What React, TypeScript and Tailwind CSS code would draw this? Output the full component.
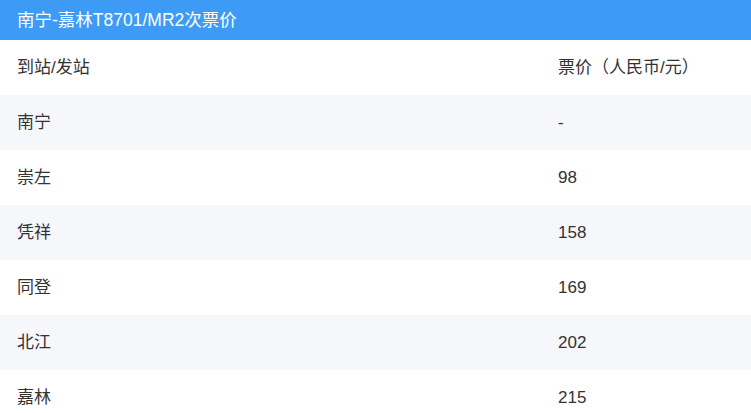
const rows = [
  { station: "南宁", price: "-" },
  { station: "崇左", price: "98" },
  { station: "凭祥", price: "158" },
  { station: "同登", price: "169" },
  { station: "北江", price: "202" },
  { station: "嘉林", price: "215" },
];

export default function App() {
  return (
    <div
      className="w-[751px] bg-white text-[17px] text-[#333]"
      style={{ fontFamily: '"Liberation Sans", "Noto Sans CJK SC", sans-serif' }}
    >
      <div className="flex h-[40px] items-center bg-[#3d9bf6] px-[17px] text-[17.5px] text-white">
        南宁-嘉林T8701/MR2次票价
      </div>
      <div className="grid h-[55px] grid-cols-[541px_1fr] items-center px-[17px]">
        <span>到站/发站</span>
        <span>票价（人民币/元）</span>
      </div>
      {rows.map((row, i) => (
        <div
          key={row.station}
          className={`grid h-[55px] grid-cols-[541px_1fr] items-center px-[17px] ${i % 2 === 0 ? "bg-[#f5f7fa]" : "bg-white"}`}
        >
          <span>{row.station}</span>
          <span>{row.price}</span>
        </div>
      ))}
    </div>
  );
}
